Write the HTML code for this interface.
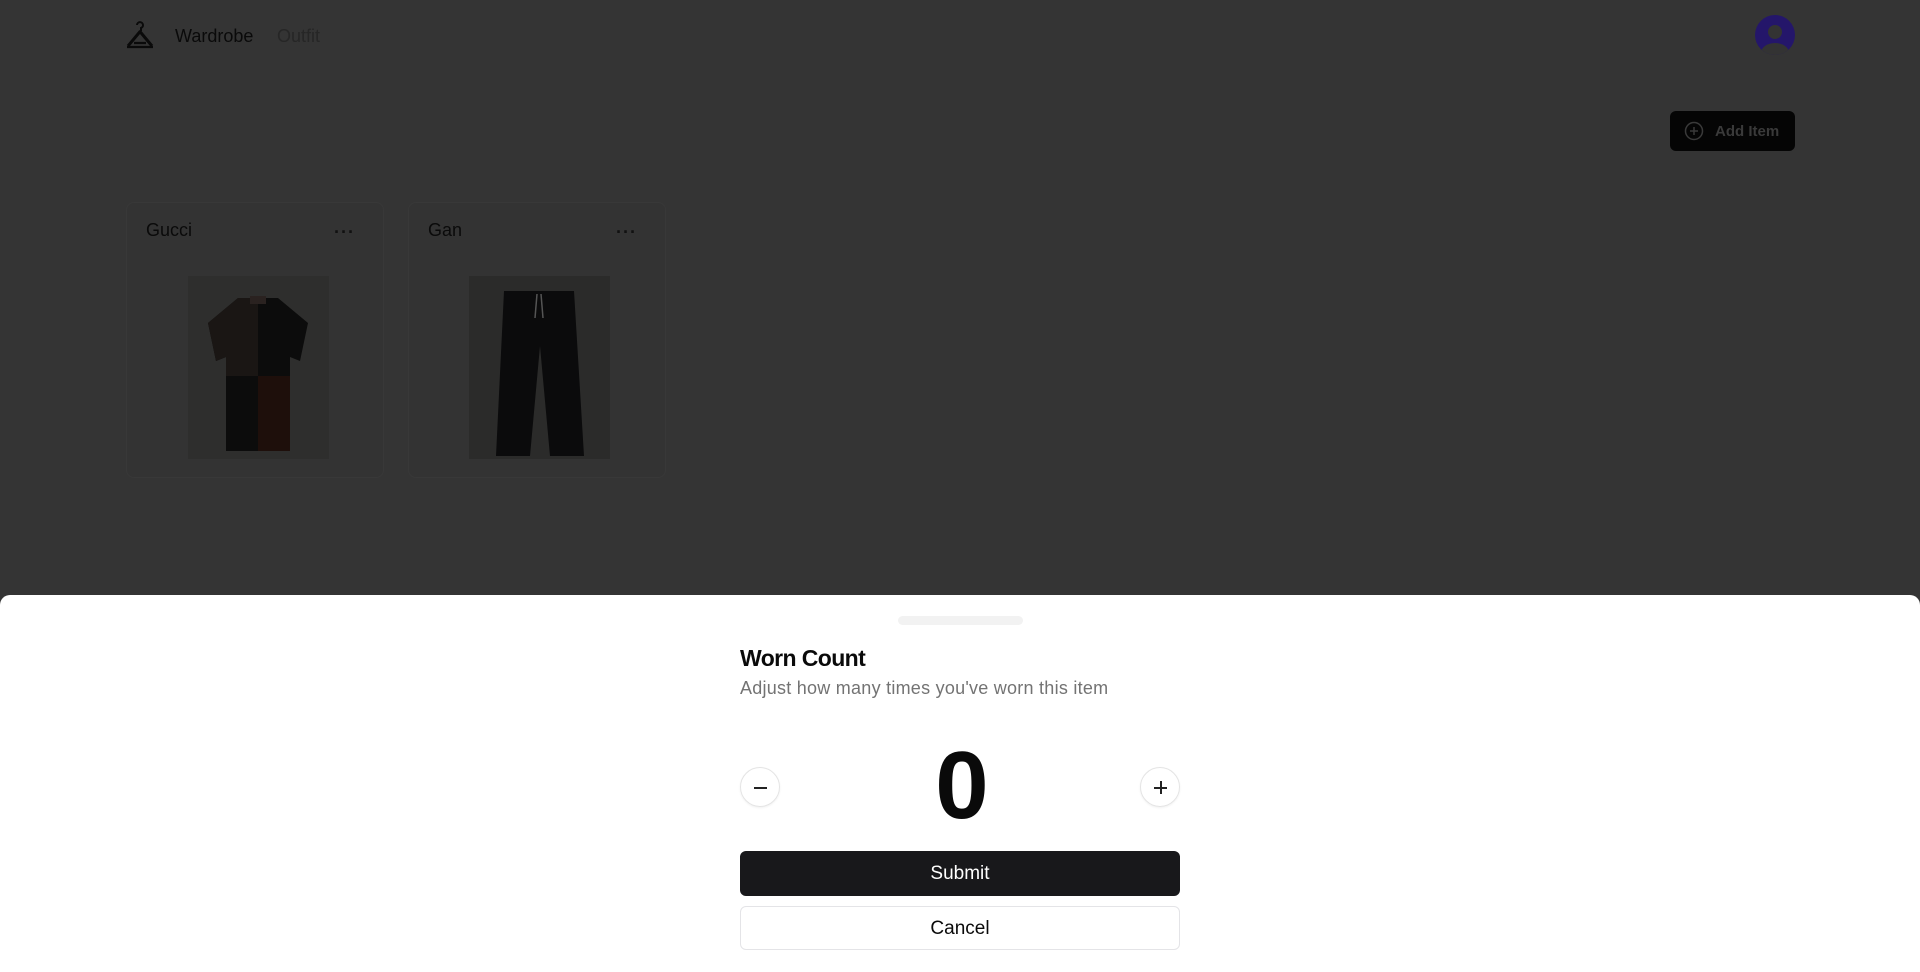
<!DOCTYPE html>
<html><head><meta charset="utf-8"><style>
*{margin:0;padding:0;box-sizing:border-box}
body{width:1920px;height:972px;background:#343434;font-family:"Liberation Sans",Arial,sans-serif;position:relative;overflow:hidden}
.abs{position:absolute}
.card{position:absolute;top:202px;width:258px;height:276px;border:1px solid #383838;border-radius:8px;background:#333}
.card .t{position:absolute;left:19px;top:17px;font-size:18px;color:#0a0a0a}
.card .d{position:absolute;right:28px;top:19px;font-size:18px;color:#111;letter-spacing:1px;font-weight:bold}
.card .img{position:absolute;top:73px;width:141px;height:183px;background:#2e2e2d}
.sheet{position:absolute;left:0;top:595px;width:1920px;height:377px;background:#fff;border-radius:10px 10px 0 0}
.btn{position:absolute;left:740px;width:440px;border-radius:6px;font-size:19px;text-align:center}
.circ{position:absolute;top:767px;width:40px;height:40px;border:1px solid #e4e4e4;border-radius:50%;box-shadow:0 1px 2px rgba(0,0,0,.06)}
</style></head><body>
<svg class="abs" style="left:125px;top:20px" width="30" height="30" viewBox="0 0 30 30"><path d="M12 5a3 3 0 1 1 4 3v3" fill="none" stroke="#0a0a0a" stroke-width="2"/><path d="M15.5 11L3 26M14.5 11L27 26" stroke="#0a0a0a" stroke-width="3" fill="none"/><path d="M2 27h26M9 23h12" stroke="#0a0a0a" stroke-width="2.2"/></svg>
<div class="abs" style="left:175px;top:26px;font-size:18px;color:#0a0a0a">Wardrobe</div>
<div class="abs" style="left:277px;top:26px;font-size:18px;color:#262626">Outfit</div>
<div class="abs" style="left:1755px;top:15px;width:40px;height:40px;border-radius:50%;background:#24166a;overflow:hidden"><div class="abs" style="left:13px;top:10px;width:14px;height:14px;border-radius:50%;background:#333"></div><div class="abs" style="left:6px;top:28px;width:28px;height:20px;border-radius:50%;background:#333"></div></div>
<div class="abs" style="left:1670px;top:111px;width:125px;height:40px;background:#050505;border-radius:6px;color:#3a3a3a;font-size:15px;font-weight:bold;line-height:42px;padding-left:45px">Add Item</div>
<svg class="abs" style="left:1684px;top:121px" width="20" height="20" viewBox="0 0 20 20"><circle cx="10" cy="10" r="8.5" fill="none" stroke="#3a3a3a" stroke-width="1.5"/><path d="M10 6v8M6 10h8" stroke="#3a3a3a" stroke-width="1.5"/></svg>
<div class="card" style="left:126px"><div class="t">Gucci</div><div class="d">···</div><div class="img" style="left:61px">
<svg width="141" height="183" viewBox="0 0 141 183"><path d="M50 22h40l30 25-8 38-10-4v94H38V81l-10 4-8-38z" fill="#0c0c0c"/><path d="M50 22h20v78H38V81l-10 4-8-38z" fill="#1a1614"/><path d="M70 100h32v75H70z" fill="#1e0f0b"/><rect x="62" y="20" width="16" height="8" fill="#2a2220"/></svg></div></div>
<div class="card" style="left:408px"><div class="t">Gan</div><div class="d">···</div><div class="img" style="left:60px;background:#2b2b2a">
<svg width="141" height="183" viewBox="0 0 141 183"><path d="M35 15h70l10 165h-34l-10-110-10 110H27z" fill="#0b0b0c"/><path d="M68 18l-2 24M72 18l2 24" stroke="#555" stroke-width="1.5"/></svg></div></div>
<div class="sheet">
<div class="abs" style="left:898px;top:21px;width:125px;height:9px;border-radius:5px;background:#f2f2f2"></div>
<div class="abs" style="left:740px;top:50px;font-size:23px;font-weight:bold;color:#0a0a0a;letter-spacing:-0.6px">Worn Count</div>
<div class="abs" style="left:740px;top:83px;font-size:18px;color:#737373;letter-spacing:0.25px">Adjust how many times you've worn this item</div>
</div>
<div class="circ" style="left:740px"><div class="abs" style="left:13px;top:19px;width:13px;height:1.6px;background:#222"></div></div>
<div class="circ" style="left:1140px"><div class="abs" style="left:13px;top:19px;width:13px;height:1.6px;background:#222"></div><div class="abs" style="left:19px;top:13px;width:1.6px;height:13px;background:#222"></div></div>
<div class="abs" style="left:860px;top:736px;width:204px;text-align:center;font-size:96px;font-weight:bold;color:#0a0a0a;line-height:100px">0</div>
<div class="btn" style="top:851px;height:45px;line-height:45px;background:#18181b;color:#fff">Submit</div>
<div class="btn" style="top:906px;height:44px;line-height:44px;border:1px solid #e4e4e7;color:#0a0a0a;background:#fff">Cancel</div>
</body></html>
